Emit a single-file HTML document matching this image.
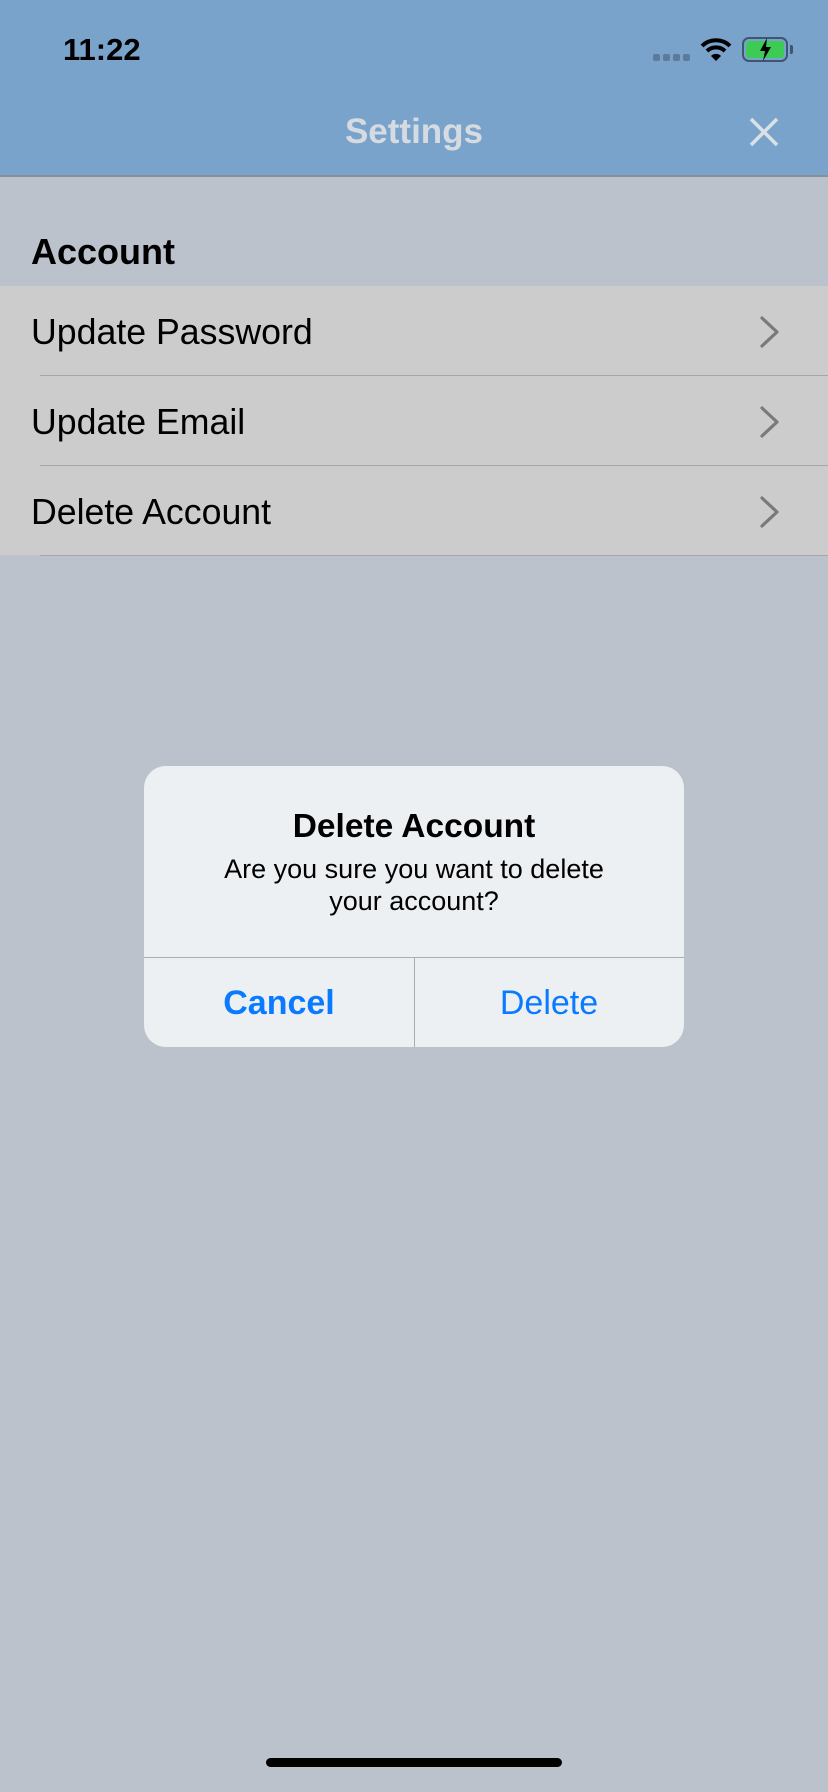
<!DOCTYPE html>
<html><head><meta charset="utf-8"><style>
*{margin:0;padding:0;box-sizing:border-box}
body{width:828px;height:1792px;background:#bbc2cb;font-family:"Liberation Sans",sans-serif;position:relative;overflow:hidden}
.nav{position:absolute;left:0;top:0;width:828px;height:177px;background:#79a3cb;border-bottom:2px solid #8a8f96}
.abs{position:absolute}
.row{position:absolute;left:0;width:828px;height:90px;background:#cccccc}
.row span{position:absolute;left:31px;top:26px;font-size:35.7px;color:#000}
.sep{position:absolute;left:40px;right:0;height:1px;background:#a6a6a6}
.chev{position:absolute;left:759px;top:29px}
</style></head><body>
<div class="nav">
 <div class="abs" style="left:63px;top:32px;font-size:31px;font-weight:bold;color:#000">11:22</div>
 <div class="abs" style="left:653px;top:54px;width:37px;height:8px">
  <div class="abs" style="left:0;width:7px;height:7px;border-radius:2px;background:#5d7a9a"></div>
  <div class="abs" style="left:10px;width:7px;height:7px;border-radius:2px;background:#5d7a9a"></div>
  <div class="abs" style="left:20px;width:7px;height:7px;border-radius:2px;background:#5d7a9a"></div>
  <div class="abs" style="left:30px;width:7px;height:7px;border-radius:2px;background:#5d7a9a"></div>
 </div>
 <svg class="abs" style="left:700px;top:37px" width="32" height="25" viewBox="0 0 32 25"><path d="M2 9a20 20 0 0 1 28 0" stroke="#000" stroke-width="4" fill="none"/><path d="M7 14a13 13 0 0 1 18 0" stroke="#000" stroke-width="4" fill="none"/><path d="M16 24l-5-5a7 7 0 0 1 10 0z" fill="#000"/></svg>
 <div class="abs" style="left:742px;top:37px;width:46px;height:25px;border:2.5px solid #3e5670;border-radius:7px;padding:2px"><div style="width:100%;height:100%;background:#3ccb55;border-radius:3px"></div></div>
 <div class="abs" style="left:790px;top:45px;width:3px;height:9px;background:#3e5670;border-radius:0 2px 2px 0"></div>
 <svg class="abs" style="left:756px;top:37px" width="18" height="25" viewBox="0 0 18 25"><path d="M11 1L4 14h5l-2 10 8-14h-5z" fill="#000"/></svg>
 <div class="abs" style="left:0;width:828px;top:112px;text-align:center;font-size:35px;font-weight:bold;color:#d6dbe1">Settings</div>
 <svg class="abs" style="left:749px;top:117px" width="30" height="30" viewBox="0 0 30 30"><path d="M2 2L28 28M28 2L2 28" stroke="#dce1e7" stroke-width="3.5"/></svg>
</div>
<div class="abs" style="left:31px;top:231px;font-size:36px;font-weight:bold;color:#000">Account</div>
<div class="row" style="top:286px"><span>Update Password</span><svg class="chev" width="22" height="34" viewBox="0 0 22 34"><path d="M3 3L18 17L3 31" stroke="#7a7a7a" stroke-width="3.2" fill="none" stroke-linecap="round" stroke-linejoin="round"/></svg></div>
<div class="sep" style="top:375px"></div>
<div class="row" style="top:376px"><span>Update Email</span><svg class="chev" width="22" height="34" viewBox="0 0 22 34"><path d="M3 3L18 17L3 31" stroke="#7a7a7a" stroke-width="3.2" fill="none" stroke-linecap="round" stroke-linejoin="round"/></svg></div>
<div class="sep" style="top:465px"></div>
<div class="row" style="top:466px;height:89px"><span>Delete Account</span><svg class="chev" width="22" height="34" viewBox="0 0 22 34"><path d="M3 3L18 17L3 31" stroke="#7a7a7a" stroke-width="3.2" fill="none" stroke-linecap="round" stroke-linejoin="round"/></svg></div>
<div class="sep" style="top:555px"></div>

<div class="abs" style="left:144px;top:766px;width:540px;height:281px;background:#edf0f3;border-radius:22px;overflow:hidden">
 <div class="abs" style="left:0;width:540px;top:42px;text-align:center;font-size:33.5px;font-weight:bold;color:#000">Delete Account</div>
 <div class="abs" style="left:0;width:540px;top:87px;text-align:center;font-size:27px;line-height:32px;color:#000">Are you sure you want to delete<br>your account?</div>
 <div class="abs" style="left:0;width:540px;top:191px;height:1px;background:#a9adb2"></div>
 <div class="abs" style="left:270px;top:192px;width:1px;height:90px;background:#a9adb2"></div>
 <div class="abs" style="left:0;width:270px;top:218px;text-align:center;font-size:34px;font-weight:bold;color:#0a7aff">Cancel</div>
 <div class="abs" style="left:270px;width:270px;top:218px;text-align:center;font-size:34px;color:#0a7aff">Delete</div>
</div>
<div class="abs" style="left:266px;top:1758px;width:296px;height:9px;border-radius:5px;background:#000"></div>
</body></html>
